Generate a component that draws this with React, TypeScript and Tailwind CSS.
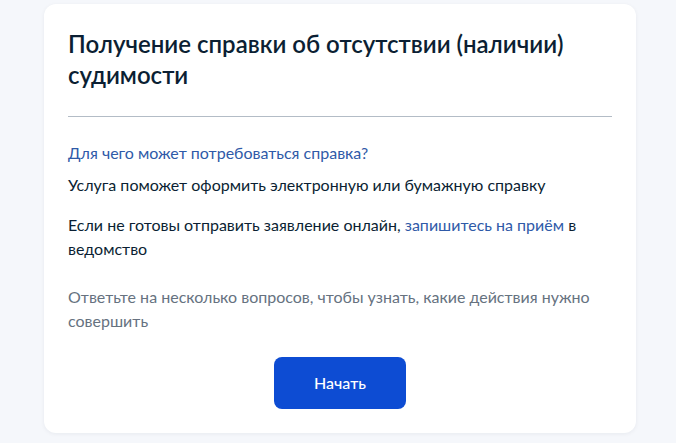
const App = () => {
    return (
        <div className="min-h-screen bg-[#f5f7fb] pl-[44px] pr-[40px] pt-1 pb-[10px]" style={{ fontFamily: "Lato, 'Noto Sans', sans-serif" }}>
            <section className="rounded-xl bg-white px-6 pt-6 pb-6 shadow-[0_1px_4px_rgba(11,31,51,0.06)]">
                <h1 className="text-[24px] leading-[31px] font-semibold text-[#0b1f33]">
                    Получение справки об отсутствии (наличии) судимости
                </h1>

                <div className="mt-[26px] mb-6 h-px bg-[#b3bcc6]" />

                <div className="text-[16px] leading-6 text-[#0b1f33]">
                    <p className="text-[#2f5aa8]">Для чего может потребоваться справка?</p>
                    <p className="mt-2">Услуга поможет оформить электронную или бумажную справку</p>
                    <p className="mt-4">
                        Если не готовы отправить заявление онлайн,{" "}
                        <a className="text-[#2f5aa8]">запишитесь на приём</a> в ведомство
                    </p>
                    <p className="mt-6 text-[#66727f]">
                        Ответьте на несколько вопросов, чтобы узнать, какие действия нужно совершить
                    </p>
                </div>

                <div className="mt-6 flex justify-center">
                    <button className="h-[52px] w-[132px] rounded-lg bg-[#0d4cd3] text-[16px] font-medium text-white">
                        Начать
                    </button>
                </div>
            </section>
        </div>
    )
}

export default App
